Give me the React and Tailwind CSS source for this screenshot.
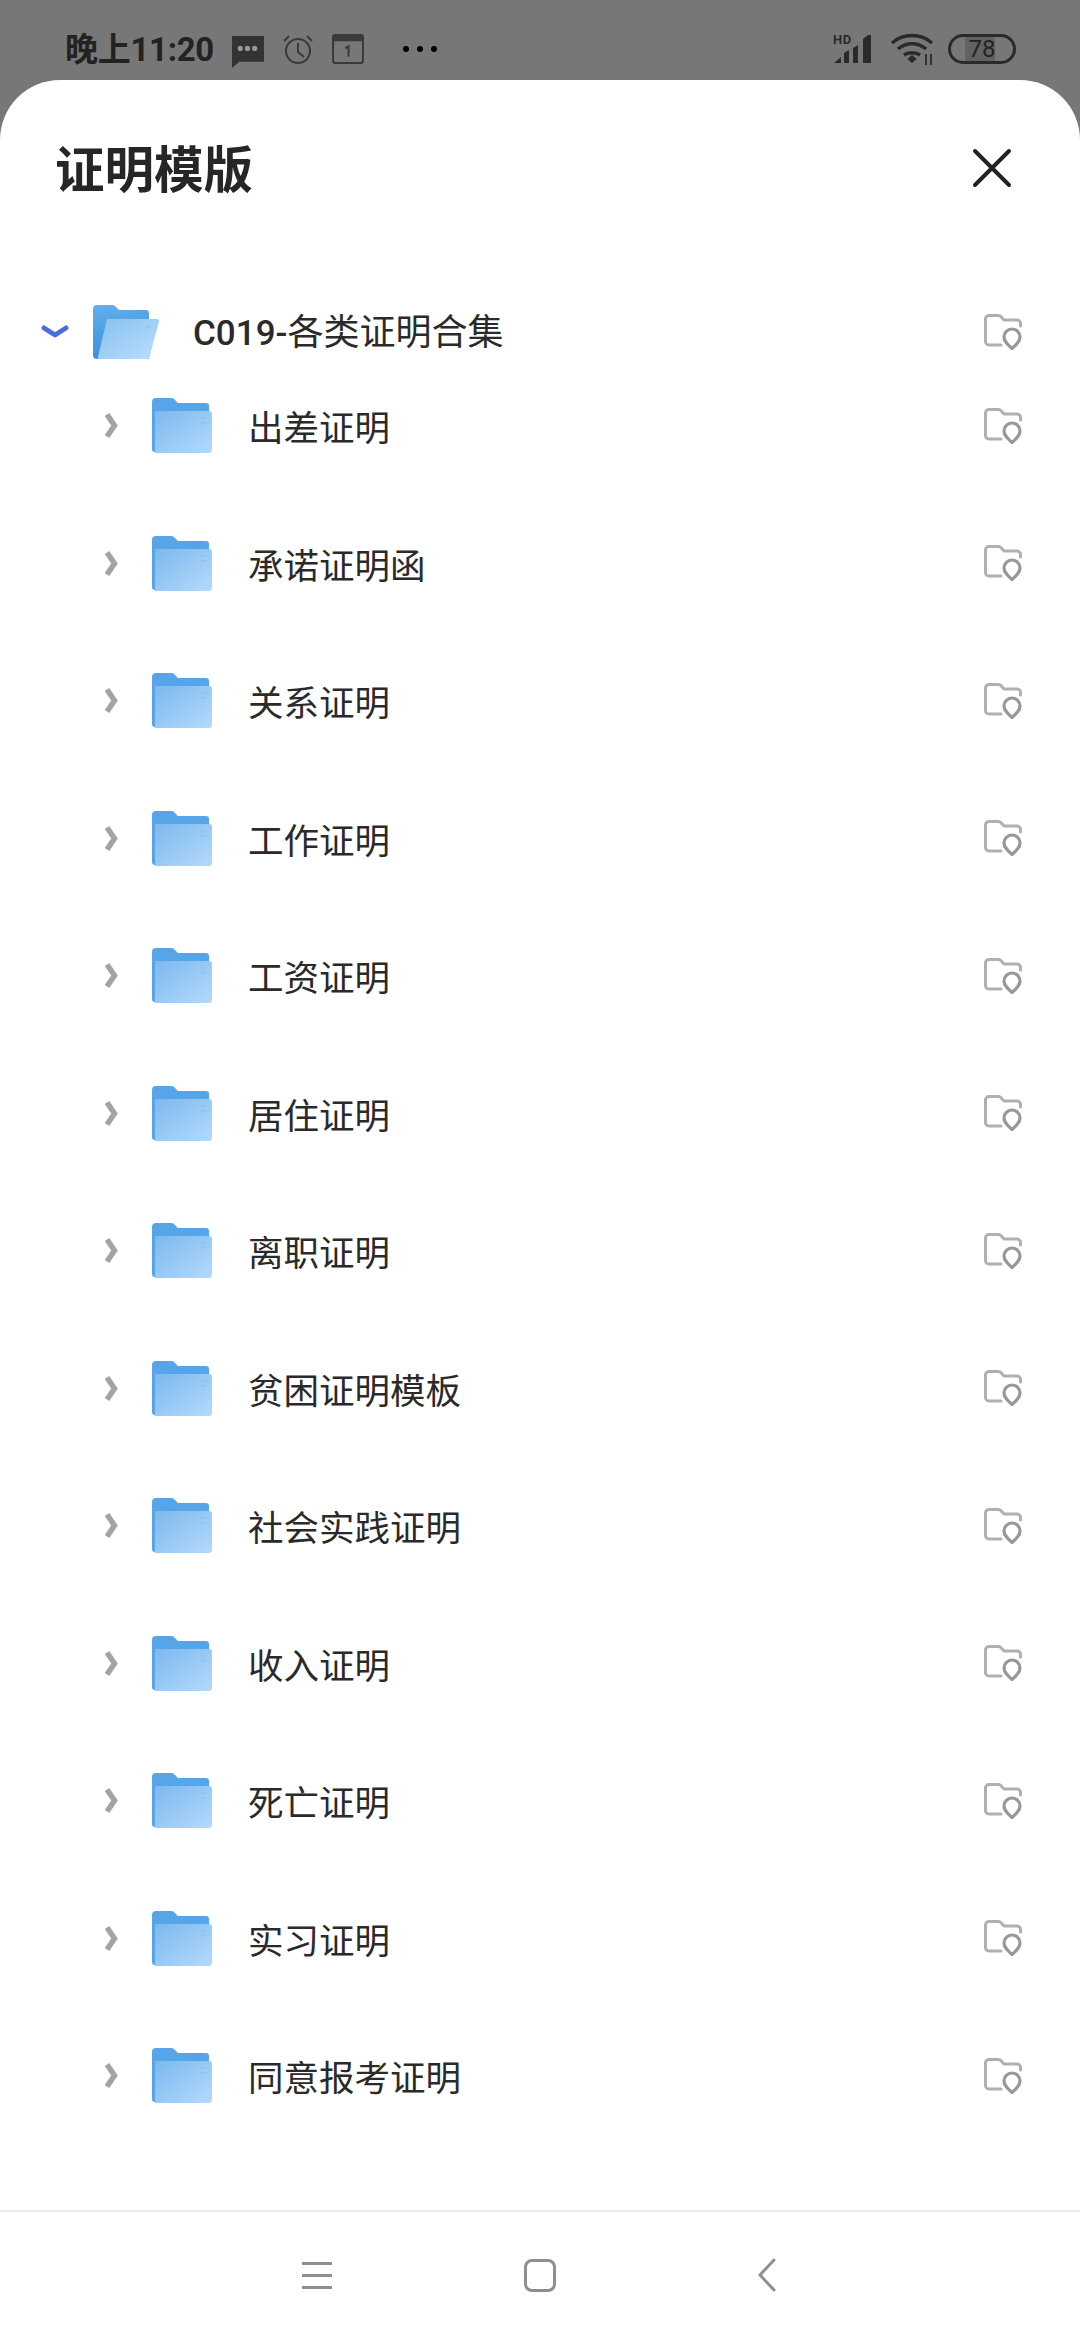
const folders = [
  "出差证明",
  "承诺证明函",
  "关系证明",
  "工作证明",
  "工资证明",
  "居住证明",
  "离职证明",
  "贫困证明模板",
  "社会实践证明",
  "收入证明",
  "死亡证明",
  "实习证明",
  "同意报考证明",
];

const FolderClosed = () => (
  <svg width="60" height="55" viewBox="0 0 60 55" className="shrink-0">
    <defs>
      <linearGradient id="closedFront" x1="0" y1="0" x2="1" y2="1">
        <stop offset="0" stopColor="#7db8ee" />
        <stop offset="1" stopColor="#b4dafb" />
      </linearGradient>
    </defs>
    <path d="M0 4a4 4 0 0 1 4-4h15a4 4 0 0 1 3.500 1.500L26 5h28a3 3 0 0 1 3 3v46H3a3 3 0 0 1-3-3z" fill="#56a5e8" />
    <path d="M3 13h54a3 3 0 0 1 3 3v36a3 3 0 0 1-3 3H3z" fill="url(#closedFront)" />
    <rect x="49" y="19" width="6" height="1.500" fill="#93c3ec" />
    <rect x="49" y="24" width="6" height="1.500" fill="#93c3ec" />
  </svg>
);

const FolderOpen = () => (
  <svg width="66" height="54" viewBox="0 0 66 54" className="shrink-0">
    <defs>
      <linearGradient id="openBack" x1="0" y1="0" x2="0.2" y2="1">
        <stop offset="0" stopColor="#62b0ec" />
        <stop offset="1" stopColor="#3b8fdd" />
      </linearGradient>
      <linearGradient id="openFront" x1="0" y1="0" x2="1" y2="1">
        <stop offset="0" stopColor="#86c0f1" />
        <stop offset="1" stopColor="#bcdefb" />
      </linearGradient>
    </defs>
    <path d="M0 4a4 4 0 0 1 4-4h15a4 4 0 0 1 3.500 1.500L26 5h27a3 3 0 0 1 3 3v46H4a4 4 0 0 1-4-4z" fill="url(#openBack)" />
    <path d="M14 14h50a2 2 0 0 1 2 2.500L56.500 52a2.500 2.500 0 0 1-2.500 2H4.500z" fill="url(#openFront)" />
    <rect x="53" y="21" width="5" height="1.500" fill="#93c3ec" />
  </svg>
);

const LocateIcon = () => (
  <svg width="38" height="36" viewBox="0 0 38 36" fill="none" stroke="#b0b0b0" strokeWidth="3" strokeLinecap="round" strokeLinejoin="round" className="shrink-0">
    <path d="M17 31H5a3.500 3.500 0 0 1-3.500-3.500V5A3.500 3.500 0 0 1 5 1.500h9.500a3 3 0 0 1 2.300 1L20 6h13a3.500 3.500 0 0 1 3.500 3.500V12" />
    <path d="M28 34.500c-4-3.500-8-7-8-11.500a8 8 0 0 1 16 0c0 4.500-4 8-8 11.500z" stroke="#989898" strokeWidth="3.200" />
  </svg>
);

const Chevron = () => (
  <svg width="14" height="27" viewBox="0 0 14 27" fill="none" stroke="#a3a3a3" strokeWidth="5.500" strokeLinejoin="miter" className="shrink-0">
    <path d="M3 2.500l7.500 11-7.500 11" />
  </svg>
);

export default function App() {
  return (
    <div className="flex h-[2340px] w-[1080px] flex-col overflow-hidden bg-[#777777] font-['Noto_Sans_CJK_SC','Noto_Sans',sans-serif]">
      {/* status bar */}
      <div className="flex h-[80px] shrink-0 items-center pl-[65px] pr-[64px] pt-[18px] text-[#222222]">
        <span className="font-['Roboto','Noto_Sans_CJK_SC',sans-serif] text-[33px] font-bold leading-none tracking-[-0.3px]">晚上11:20</span>
        <svg width="34" height="33" viewBox="0 0 33 32" className="ml-[17px] mt-[4px]">
          <path d="M1 1h31v25H8l-7 6z" fill="#333333" />
          <circle cx="9" cy="13" r="2.500" fill="#999999" />
          <circle cx="16" cy="13" r="2.500" fill="#999999" />
          <circle cx="23" cy="13" r="2.500" fill="#999999" />
        </svg>
        <svg width="32" height="30" viewBox="0 0 32 30" fill="none" stroke="#3a3a3a" strokeWidth="2" className="ml-[17px]">
          <circle cx="16" cy="17" r="12" />
          <path d="M16 9v9l6 5M2 7l5-5M30 7l-5-5" />
        </svg>
        <svg width="32" height="30" viewBox="0 0 31 29" className="ml-[18px]">
          <rect x="1" y="1" width="29" height="27" rx="2" fill="none" stroke="#3a3a3a" strokeWidth="2" />
          <rect x="1" y="1" width="29" height="6" fill="#3a3a3a" />
          <path d="M13 14l3-2v10" fill="none" stroke="#3a3a3a" strokeWidth="2" />
        </svg>
        <div className="ml-[39px] flex gap-[8px]">
          <span className="h-[6px] w-[6px] rounded-full bg-black" />
          <span className="h-[6px] w-[6px] rounded-full bg-black" />
          <span className="h-[6px] w-[6px] rounded-full bg-black" />
        </div>
        <div className="ml-auto flex items-center">
          <svg width="42" height="32" viewBox="0 0 42 32">
            <text x="0" y="11" fontSize="13" fontWeight="700" letterSpacing="0.5" fill="#2a2a2a" fontFamily="Roboto, sans-serif">HD</text>
            <path d="M1 30l7-6v6zM11 30V20l5-3v13zM20 30V15l5-3v18zM30 30V6l5-4h3v28z" fill="#2a2a2a" />
          </svg>
          <svg width="44" height="34" viewBox="0 0 44 34" fill="none" stroke="#2a2a2a" strokeWidth="3.500" className="ml-[15px]">
            <path d="M2 11c11-10 29-10 40 0M8 17c8-7 20-7 28 0M14 23c4-3 12-3 16 0" />
            <path d="M18.500 27l3.500-3 3.500 3-3.500 3z" fill="#2a2a2a" strokeWidth="1.500" />
            <path d="M36 22v11M41 22v11" stroke="#2a2a2a" strokeWidth="1.800" />
          </svg>
          <div className="relative ml-[14px] flex h-[30px] w-[68px] items-center justify-center overflow-hidden rounded-full border-[3px] border-[#2a2a2a] font-['Roboto',sans-serif] text-[24px] leading-none">
            <span className="absolute inset-y-0 left-[14px] w-[30px] bg-[#626262]" />
            <span className="relative">78</span>
          </div>
        </div>
      </div>

      {/* sheet */}
      <div className="flex min-h-0 flex-1 flex-col rounded-t-[60px] bg-white">
        <div className="flex h-[227px] shrink-0 items-start justify-between pl-[55px] pr-[68px] pt-[57px]">
          <h1 className="text-[49.5px] font-bold leading-[60px] text-[#262626]">证明模版</h1>
          <svg width="40" height="40" viewBox="0 0 40 40" fill="none" stroke="#222222" strokeWidth="4" strokeLinecap="round" className="mt-[11px]">
            <path d="M3 3l34 34M37 3L3 37" />
          </svg>
        </div>

        <div className="flex h-[50px] shrink-0 items-center pl-[41px] pr-[58px]">
          <svg width="28" height="16" viewBox="0 0 28 16" fill="none" stroke="#4a6fdc" strokeWidth="5" strokeLinecap="round" strokeLinejoin="round" className="shrink-0">
            <path d="M3 4l11 7 11-7" />
          </svg>
          <div className="ml-[24px]">
            <FolderOpen />
          </div>
          <span className="ml-[34px] mb-[3px] flex-1 text-[36px] leading-none text-[#2a2a2a]">
            <span className="font-['Roboto',sans-serif] text-[35px] font-medium">C019-</span>各类证明合集
          </span>
          <LocateIcon />
        </div>

        {folders.map((name) => (
          <div key={name} className="flex h-[137.5px] shrink-0 items-center pl-[104px] pr-[58px]">
            <Chevron />
            <div className="ml-[34px]">
              <FolderClosed />
            </div>
            <span className="ml-[36px] flex-1 text-[35.5px] leading-none text-[#2a2a2a]">{name}</span>
            <LocateIcon />
          </div>
        ))}

        {/* nav bar */}
        <div className="mt-auto flex h-[130px] shrink-0 items-center border-t-2 border-[#ececec] pb-[2px] pl-[302px]">
          <div className="flex h-[27px] w-[30px] flex-col justify-between">
            <span className="h-[3px] bg-[#8f8f8f]" />
            <span className="h-[3px] bg-[#8f8f8f]" />
            <span className="h-[3px] bg-[#8f8f8f]" />
          </div>
          <span className="ml-[192px] h-[33px] w-[32px] rounded-[8px] border-[3px] border-[#8f8f8f]" />
          <svg width="18" height="34" viewBox="0 0 18 34" fill="none" stroke="#8f8f8f" strokeWidth="3" strokeLinecap="round" className="ml-[202px]">
            <path d="M16 2L2 17l14 15" />
          </svg>
        </div>
      </div>
    </div>
  );
}
